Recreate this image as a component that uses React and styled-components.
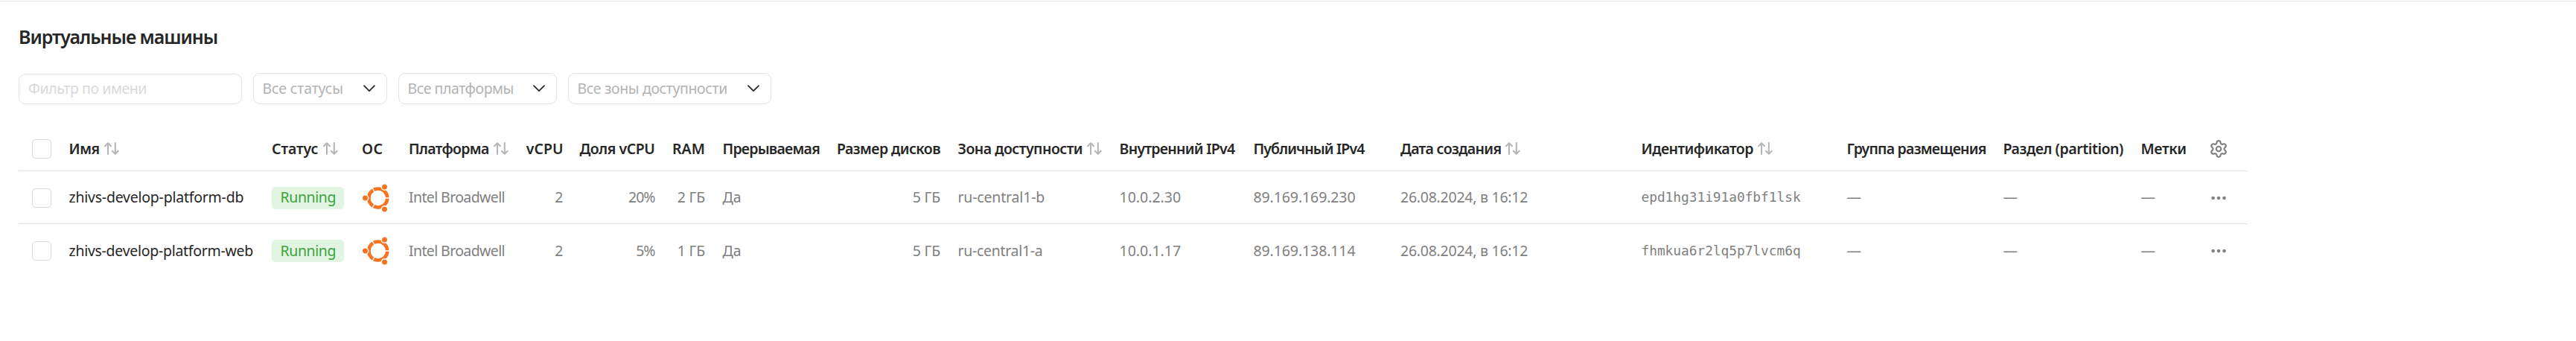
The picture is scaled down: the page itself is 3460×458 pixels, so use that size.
import React from "react";
import styled, { createGlobalStyle } from "styled-components";
import { Settings } from "lucide-react";

const GlobalStyle = createGlobalStyle`
  *, *::before, *::after { box-sizing: border-box; }
  body {
    margin: 0;
    background: #fff;
    color: #262626;
    font-family: "Noto Sans", "Open Sans", sans-serif;
    font-size: 19.5px;
    line-height: 27px;
  }
`;

const Page = styled.main`
  margin-top: 1px;
  padding: 27px 25px 0;
  border-top: 1px solid #e5e5e5;
`;

const Title = styled.h1`
  margin: 0;
  font-size: 25px;
  font-weight: 560;
  line-height: 40px;
  letter-spacing: -1.05px;
`;

const Toolbar = styled.div`
  display: flex;
  align-items: flex-end;
  gap: 15px;
  margin-top: 29px;
`;

const SearchInput = styled.input`
  width: 300px;
  height: 41px;
  padding: 0 12px 2px 12px;
  border: 1px solid #e3e3e3;
  border-radius: 9px;
  outline: none;
  background: #fff;
  font: inherit;
  letter-spacing: -0.42px;
  &::placeholder { color: #d9d9d9; opacity: 1; }
`;

const Select = styled.button`
  display: flex;
  align-items: center;
  justify-content: space-between;
  width: ${(p) => p.$width}px;
  height: 42px;
  padding: 0 15px 1px 11.5px;
  border: 1px solid #e3e3e3;
  border-radius: 9px;
  background: #fff;
  color: #b3b3b3;
  font: inherit;
  white-space: nowrap;
`;

const Text = styled.span`
  letter-spacing: ${(p) => p.$ls || 0}px;
  white-space: nowrap;
`;

const Table = styled.div`
  width: 2994px;
  margin-top: 31px;
`;

const Row = styled.div`
  --text-lift: ${(p) => p.$lift || 1}px;
  display: grid;
  grid-template-columns:
    67.5px 272.5px 121px 63px 158px 73px 123px 67.5px 153.5px 162.5px
    217px 180px 197.5px 323.5px 276px 210px 185px 80px 63px;
  align-items: center;
  height: ${(p) => p.$height}px;
  padding-top: ${(p) => p.$padTop || 0}px;
  border-bottom: ${(p) => (p.$last ? "none" : "1px solid #e5e5e5")};
  color: ${(p) => (p.$head ? "#262626" : "#808080")};
  font-weight: ${(p) => (p.$head ? 560 : 400)};
`;

const Cell = styled.div`
  display: flex;
  align-items: center;
  justify-content: ${(p) => (p.$right ? "flex-end" : "flex-start")};
  gap: 6px;
  padding-right: 23.5px;
  padding-bottom: var(--text-lift);
  white-space: nowrap;
`;

const CheckCell = styled(Cell)`
  padding: 0 0 0 18px;
`;

const Checkbox = styled.span`
  width: 26px;
  height: 26px;
  border: 1px solid #d9d9d9;
  border-radius: 5px;
`;

const NameCell = styled(Cell)`
  color: #262626;
`;

const StatusCell = styled(Cell)`
  padding: 0;
`;

const Badge = styled.span`
  display: flex;
  align-items: center;
  height: 30px;
  width: 97px;
  padding: 0 0 var(--text-lift) 11.5px;
  border-radius: 5px;
  background: #e2f5e2;
  color: #3ba33b;
  letter-spacing: -0.4px;
`;

const OsCell = styled(Cell)`
  padding: 0 0 0 1px;
`;

const Mono = styled.span`
  font-family: "DejaVu Sans Mono", "Liberation Mono", monospace;
  font-size: 17.8px;
`;

const ActionCell = styled(Cell)`
  padding: 0 0 0 11.5px;
`;

const Icon = styled.svg`
  display: block;
  flex: none;
  overflow: visible;
`;

const Chevron = () => (
  <Icon width="16" height="10" viewBox="0 0 16 10" fill="none" stroke="#262626" strokeWidth="1.7" strokeLinecap="round" strokeLinejoin="round">
    <path d="M1 1.2 8 8.2l7-7" />
  </Icon>
);

const SortIcon = () => (
  <Icon width="20" height="17" viewBox="0 0 20 17" fill="none" stroke="#b5b5b5" strokeWidth="2" strokeLinecap="round" strokeLinejoin="round">
    <path d="M5 16V1.2M1 5.2l4-4 4 4M14.8 1v14.8M10.8 11.8l4 4 4-4" />
  </Icon>
);

const UbuntuIcon = () => (
  <Icon width="36" height="38" viewBox="0 0 36 38" fill="#f67421">
    <circle cx="20.8" cy="19" r="12.5" fill="none" stroke="#f67421" strokeWidth="4.7" />
    <path d="M20.8 19h16M20.8 19l-8-13.86M20.8 19l-8 13.86" stroke="#fff" strokeWidth="1.3" />
    <g stroke="#fff" strokeWidth="1.4">
      <circle cx="3.5" cy="19" r="4.2" />
      <circle cx="29.5" cy="4" r="4.2" />
      <circle cx="29.5" cy="34" r="4.2" />
    </g>
  </Icon>
);

const DotsIcon = () => (
  <Icon width="26" height="6" viewBox="0 0 26 6" fill="#808080">
    <circle cx="5.6" cy="3" r="2.3" />
    <circle cx="13" cy="3" r="2.3" />
    <circle cx="20.5" cy="3" r="2.3" />
  </Icon>
);

const filters = [
  { label: "Все статусы", ls: -0.15, width: 180 },
  { label: "Все платформы", ls: -0.45, width: 213 },
  { label: "Все зоны доступности", ls: -0.38, width: 273 },
];

const columns = [
  { label: "Имя", ls: -0.5, sort: true },
  { label: "Статус", ls: -0.05, sort: true },
  { label: "ОС", ls: 0.5 },
  { label: "Платформа", ls: -0.65, sort: true },
  { label: "vCPU", ls: 0, right: true },
  { label: "Доля vCPU", ls: -0.42, right: true },
  { label: "RAM", ls: 0.1, right: true },
  { label: "Прерываемая", ls: -0.75 },
  { label: "Размер дисков", ls: -0.55, right: true },
  { label: "Зона доступности", ls: -0.5, sort: true },
  { label: "Внутренний IPv4", ls: -0.7 },
  { label: "Публичный IPv4", ls: -0.88 },
  { label: "Дата создания", ls: -0.65, sort: true },
  { label: "Идентификатор", ls: -0.5, sort: true },
  { label: "Группа размещения", ls: -0.75 },
  { label: "Раздел (partition)", ls: -0.42 },
  { label: "Метки", ls: -0.3 },
];

const machines = [
  {
    name: "zhivs-develop-platform-db", nameLs: -0.23, share: "20%", ram: "2 ГБ",
    zone: "ru-central1-b", zoneLs: -0.18, internal: "10.0.2.30", external: "89.169.169.230",
    id: "epd1hg31i91a0fbf1lsk", height: 71, padTop: 2, lift: 3,
  },
  {
    name: "zhivs-develop-platform-web", nameLs: -0.28, share: "5%", ram: "1 ГБ",
    zone: "ru-central1-a", zoneLs: -0.3, internal: "10.0.1.17", external: "89.169.138.114",
    id: "fhmkua6r2lq5p7lvcm6q", height: 72, padTop: 0, lift: 1,
  },
];

export default function App() {
  return (
    <>
      <GlobalStyle />
      <Page>
        <Title>Виртуальные машины</Title>
        <Toolbar>
          <SearchInput placeholder="Фильтр по имени" />
          {filters.map((f) => (
            <Select key={f.label} type="button" $width={f.width}>
              <Text $ls={f.ls}>{f.label}</Text>
              <Chevron />
            </Select>
          ))}
        </Toolbar>
        <Table>
          <Row $head $height={59}>
            <CheckCell><Checkbox /></CheckCell>
            {columns.map((c) => (
              <Cell key={c.label} $right={c.right}>
                <Text $ls={c.ls}>{c.label}</Text>
                {c.sort && <SortIcon />}
              </Cell>
            ))}
            <ActionCell><Settings size={26} strokeWidth={2} color="#808080" /></ActionCell>
          </Row>
          {machines.map((m, i) => (
            <Row key={m.id} $height={m.height} $padTop={m.padTop} $lift={m.lift} $last={i === machines.length - 1}>
              <CheckCell><Checkbox /></CheckCell>
              <NameCell><Text $ls={m.nameLs}>{m.name}</Text></NameCell>
              <StatusCell><Badge>Running</Badge></StatusCell>
              <OsCell><UbuntuIcon /></OsCell>
              <Cell><Text $ls={-0.62}>Intel Broadwell</Text></Cell>
              <Cell $right><Text>2</Text></Cell>
              <Cell $right><Text $ls={-1}>{m.share}</Text></Cell>
              <Cell $right><Text $ls={-0.2}>{m.ram}</Text></Cell>
              <Cell><Text>Да</Text></Cell>
              <Cell $right><Text $ls={-0.2}>5 ГБ</Text></Cell>
              <Cell><Text $ls={m.zoneLs}>{m.zone}</Text></Cell>
              <Cell><Text>{m.internal}</Text></Cell>
              <Cell><Text $ls={-0.1}>{m.external}</Text></Cell>
              <Cell><Text $ls={-0.25}>26.08.2024, в 16:12</Text></Cell>
              <Cell><Mono>{m.id}</Mono></Cell>
              <Cell><Text>—</Text></Cell>
              <Cell><Text>—</Text></Cell>
              <Cell><Text>—</Text></Cell>
              <ActionCell><DotsIcon /></ActionCell>
            </Row>
          ))}
        </Table>
      </Page>
    </>
  );
}
